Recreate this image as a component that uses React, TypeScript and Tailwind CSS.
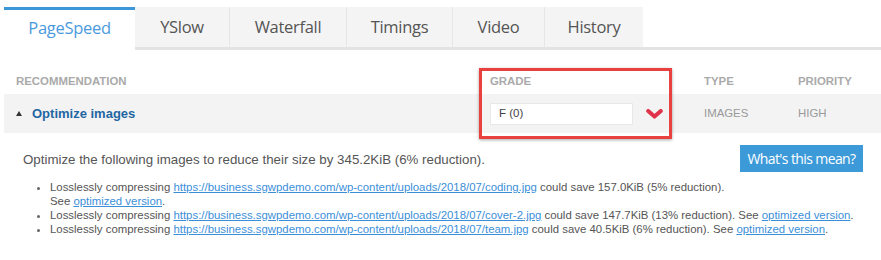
import React from 'react';

const tabs = ['PageSpeed', 'YSlow', 'Waterfall', 'Timings', 'Video', 'History'];

const items = [
  { file: 'coding.jpg', save: '157.0KiB (5% reduction).', wrap: true },
  { file: 'cover-2.jpg', save: '147.7KiB (13% reduction).', wrap: false },
  { file: 'team.jpg', save: '40.5KiB (6% reduction).', wrap: false },
];

const base = 'https://business.sgwpdemo.com/wp-content/uploads/2018/07/';

const App: React.FC = () => {
  return (
    <div className="w-[881px] h-[260px] bg-white pl-1 font-['Liberation_Sans',Arial,sans-serif] relative overflow-hidden">
      {/* Tabs */}
      <div className="flex pt-[7px] font-['Open_Sans',sans-serif] text-[16.5px] tracking-[-0.3px]">
        {tabs.map((t, i) =>
          i === 0 ? (
            <div
              key={t}
              className="w-[131px] h-[43px] border-t-[3px] border-[#3c97d8] text-[#4a9ade] flex items-center justify-center pb-[3px]"
            >
              {t}
            </div>
          ) : (
            <div
              key={t}
              className={`h-[43px] bg-[#f4f4f4] border-b-[3px] border-b-[#e3e3e3] text-[#555] flex items-center justify-center pt-px ${
                i > 1 ? 'border-l border-l-[#e6e6e6]' : ''
              } ${['', 'w-[94px]', 'w-[117px]', 'w-[106px]', 'w-[92px]', 'w-[99px]'][i]}`}
            >
              {t}
            </div>
          )
        )}
        <div className="flex-1 h-[43px] border-b-[3px] border-b-[#e3e3e3]" />
      </div>

      {/* Table header */}
      <div className="grid grid-cols-[474px_214px_94px_1fr] pl-3 h-[44px] items-center text-[11.4px] font-bold text-[#aaa] pt-[20px]">
        <div>RECOMMENDATION</div>
        <div>GRADE</div>
        <div>TYPE</div>
        <div>PRIORITY</div>
      </div>

      {/* Row */}
      <div className="grid grid-cols-[474px_214px_94px_1fr] pl-3 h-[39px] items-center bg-[#f3f3f3]">
        <div className="flex items-center gap-[10px]">
          <svg width="6" height="5" viewBox="0 0 6 5">
            <polygon points="3,0 6,5 0,5" fill="#333" />
          </svg>
          <span className="text-[13px] font-bold text-[#1f67a3]">Optimize images</span>
        </div>
        <div className="flex items-center">
          <div className="w-[143px] h-[22px] bg-white border border-[#e8e8e8] flex items-center pl-2 text-[11.5px] text-[#444]">
            F (0)
          </div>
          <svg width="17" height="10" viewBox="0 0 17 10" className="ml-[13px]">
            <polyline points="2.2,2 8.5,7.6 14.8,2" fill="none" stroke="#e0334a" strokeWidth="4" strokeLinecap="round" strokeLinejoin="round" />
          </svg>
        </div>
        <div className="text-[11.4px] text-[#999]">IMAGES</div>
        <div className="text-[11.4px] text-[#999]">HIGH</div>
      </div>

      {/* Details */}
      <div className="flex justify-between pl-[19px] pr-[18px] pt-[19px]">
        <div className="text-[13.3px] text-[#555] leading-[16px]">
          Optimize the following images to reduce their size by 345.2KiB (6% reduction).
        </div>
        <button className="w-[123px] h-[27px] bg-[#3d9ad9] text-white text-[14px] font-['Open_Sans',sans-serif] tracking-[-0.6px] -mt-[7px]">
          What's this mean?
        </button>
      </div>
      <ul className="list-disc pl-[46px] text-[11.4px] leading-[14px] text-[#555] mt-[8px] marker:text-[#666]">
        {items.map((it) => (
          <li key={it.file}>
            Losslessly compressing{' '}
            <a className="text-[#3b8fd9] underline">{base + it.file}</a> could save {it.save}
            {it.wrap ? <br /> : ' '}
            See <a className="text-[#3b8fd9] underline">optimized version</a>.
          </li>
        ))}
      </ul>

      {/* Highlight annotation */}
      <div className="absolute left-[479px] top-[68px] w-[193px] h-[71px] border-[3px] border-[#e8413f] shadow-[0_1px_3px_rgba(0,0,0,0.35)]" />
    </div>
  );
};

export default App;
